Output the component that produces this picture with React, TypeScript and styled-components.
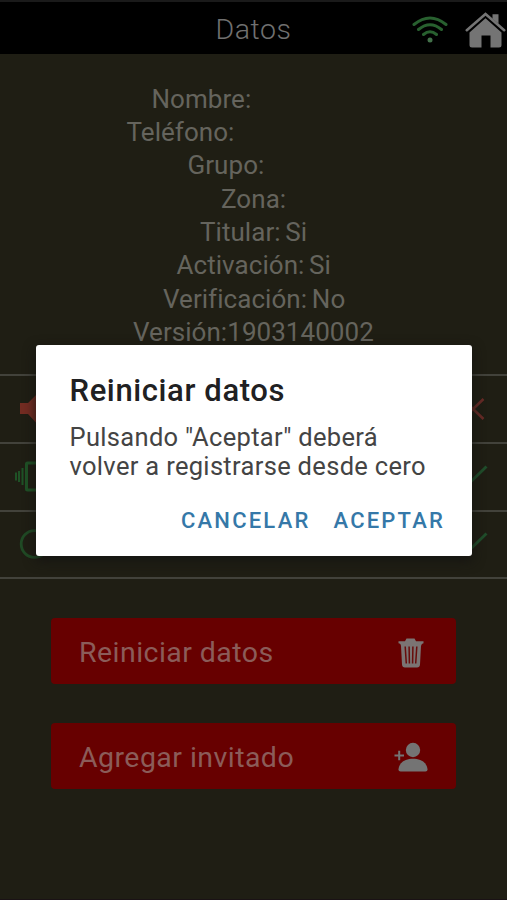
import React from "react";
import styled, { createGlobalStyle } from "styled-components";

const GlobalStyle = createGlobalStyle`
  *, *::before, *::after { box-sizing: border-box; }
  body {
    margin: 0;
    background: #1f1e14;
    font-family: Roboto, "Liberation Sans", sans-serif;
    overflow: hidden;
  }
  button { font: inherit; border: 0; cursor: pointer; }
`;

const Screen = styled.main`
  position: relative;
  width: 507px;
  height: 900px;
  display: flex;
  flex-direction: column;
  background: #1f1e14;
  border-top: 2px solid #1a1a1a;
  border-bottom: 1px solid #1a1215;
  overflow: hidden;
`;

const Header = styled.header`
  height: 52px;
  flex: none;
  display: grid;
  grid-template-columns: 1fr auto 1fr;
  align-items: center;
  background: #000;
`;

const HeaderTitle = styled.h1`
  grid-column: 2;
  margin: 4px 0 0;
  font-size: 28.5px;
  line-height: 32px;
  font-weight: 300;
  letter-spacing: 0.5px;
  color: #707070;
`;

const HeaderIcons = styled.div`
  display: flex;
  justify-content: flex-end;
  align-items: center;
  gap: 17px;
  padding: 3px 1px 0 0;
  svg { display: block; flex: none; }
`;

const Details = styled.section`
  height: 320px;
  flex: none;
  padding-top: 28.6px;
`;

const Detail = styled.p<{ $indent: number }>`
  margin: 0;
  padding-left: ${(p) => p.$indent}px;
  font-size: 26px;
  line-height: 33.35px;
  letter-spacing: 0.05px;
  word-spacing: -1.8px;
  color: #65645d;
  white-space: nowrap;
`;

const Options = styled.ul`
  margin: 0;
  padding: 0;
  list-style: none;
  flex: none;
  border-bottom: 2px solid #42423b;
`;

const Option = styled.li`
  height: 67.8px;
  display: flex;
  align-items: center;
  justify-content: space-between;
  padding: 0 16px 0 14px;
  border-top: 2px solid #42423b;
  svg { display: block; }
`;

const Actions = styled.div`
  display: flex;
  flex-direction: column;
  gap: 39px;
  padding: 39px 51px 0 51px;
`;

const ActionButton = styled.button`
  height: 66px;
  display: flex;
  align-items: center;
  justify-content: space-between;
  padding: 3px 25.5px 0 28px;
  border-radius: 4px;
  background: #670000;
  color: #8b5c59;
  line-height: 34px;
  text-align: left;
  svg { display: block; }
`;

const ActionLabel = styled.span`
  font-size: 28.5px;
  letter-spacing: 0.45px;
`;

const Overlay = styled.div`
  position: absolute;
  inset: -2px 0 0;
  padding: 345px 35px 0 36px;
`;

const Dialog = styled.section`
  height: 211px;
  display: flex;
  flex-direction: column;
  padding: 28px 25px 20px 33.5px;
  border-radius: 3px;
  background: #fff;
  box-shadow: 0 4px 12px 1px rgba(20, 19, 18, 0.8);
`;

const DialogTitle = styled.h2`
  margin: 0;
  font-size: 31px;
  line-height: 36px;
  font-weight: 500;
  letter-spacing: 0.62px;
  color: #202022;
`;

const DialogText = styled.p`
  margin: 14px 0 0;
  font-size: 25.5px;
  line-height: 28.5px;
  letter-spacing: 0.32px;
  color: #444;
  white-space: nowrap;
`;

const DialogActions = styled.div`
  display: flex;
  justify-content: flex-end;
  gap: 23px;
  margin-top: auto;
  padding-right: 2px;
`;

const TextButton = styled.button`
  padding: 0;
  background: none;
  color: #3578a8;
  && {
    font-size: 22px;
    font-weight: 500;
    line-height: 30px;
    letter-spacing: 2.2px;
  }
`;

const WifiIcon = () => (
  <svg width="36" height="28" viewBox="0 0 36 28" fill="none" stroke="#28602f" strokeWidth="3" strokeLinecap="round">
    <path d="M2 8.5Q18-4.5 34 8.5M6.5 13.5Q18 4 29.5 13.5M11.5 18.5Q18 13 24.5 18.5" />
    <circle cx="18" cy="24" r="2.5" fill="#43714a" stroke="none" />
  </svg>
);

const HomeIcon = () => (
  <svg width="41" height="36" viewBox="0 0 41 36" fill="#747474">
    <path d="M4.5 20.5 20.5 6.2 36.5 20.5V33a2.5 2.5 0 0 1-2.5 2.5h-8.5v-12h-9v12H7A2.5 2.5 0 0 1 4.5 33Z" />
    <path d="M1.8 18.2 20.5 2 39.2 18.2" fill="none" stroke="#747474" strokeWidth="2.6" strokeLinecap="round" />
    <path d="M27.5 2.2h6v9.5l-6-5Z" />
  </svg>
);

const SpeakerIcon = () => (
  <svg width="40" height="42" viewBox="0 0 40 42" fill="#732c22">
    <path d="M6 15h8l12-12v36L14 26H6Z" />
  </svg>
);

const VibrateIcon = () => (
  <svg width="42" height="38" viewBox="0 0 42 38" fill="none" stroke="#1f5226">
    <path d="M2 14.5v8M5 13v11M8.5 10v17" strokeWidth="2" />
    <rect x="12.5" y="5" width="18" height="27" rx="1" strokeWidth="3" />
  </svg>
);

const CircleIcon = () => (
  <svg width="42" height="42" viewBox="0 0 42 42" fill="none" stroke="#204a25" strokeWidth="2.8">
    <circle cx="20.5" cy="21" r="13.3" />
  </svg>
);

const CrossIcon = () => (
  <svg width="24" height="24" viewBox="0 0 24 24" fill="none" stroke="#662b26" strokeWidth="2.6">
    <path d="M16.5 2 6 12 16.5 22M-4 2 6 12-4 22" />
  </svg>
);

const CheckIcon = () => (
  <svg width="26" height="24" viewBox="0 0 26 24" fill="none" stroke="#204d2b" strokeWidth="2.9">
    <path d="M21.5 1.5 4.5 18-3 11" />
  </svg>
);

const TrashIcon = () => (
  <svg width="40" height="32" viewBox="0 0 40 32">
    <path d="M7.5 6.2V4.2H14L15.5 1.5h8L25 4.2h7.5v2Q30.5 6.2 30 9L29 27.5Q28.8 30.5 26 30.5H14Q11.2 30.5 11 27.5L10 9Q9.7 6.2 7.5 6.2Z" fill="#7b7473" />
    <path d="m14.2 9.5 1.1 17M18.1 9.5l.3 17M21.9 9.5l-.3 17M25.8 9.5l-1.1 17" fill="none" stroke="#680c0b" strokeWidth="1.5" />
  </svg>
);

const GuestIcon = () => (
  <svg width="40" height="34" viewBox="0 0 40 34" fill="#747474">
    <circle cx="22" cy="9" r="7.2" />
    <path d="M7.5 28C8.5 20.8 15 17.8 22 17.8S35.5 20.8 36.5 28Q36.8 30.5 34.5 30.5h-25Q7.2 30.5 7.5 28Z" />
    <path d="M3.5 14.5h9.5M8.2 9.7v9.6" stroke="#747474" strokeWidth="2" />
  </svg>
);

const details = [
  { text: "Nombre:", indent: 151.5 },
  { text: "Teléfono:", indent: 126.5 },
  { text: "Grupo:", indent: 187.5 },
  { text: "Zona:", indent: 221 },
  { text: "Titular: Si", indent: 200 },
  { text: "Activación: Si", indent: 176.5 },
  { text: "Verificación: No", indent: 163 },
  { text: "Versión:1903140002", indent: 133 },
];

export default function App() {
  return (
    <>
      <GlobalStyle />
      <Screen>
        <Header>
          <HeaderTitle>Datos</HeaderTitle>
          <HeaderIcons>
            <WifiIcon />
            <HomeIcon />
          </HeaderIcons>
        </Header>
        <Details>
          {details.map((d) => (
            <Detail key={d.text} $indent={d.indent}>{d.text}</Detail>
          ))}
        </Details>
        <Options>
          <Option><SpeakerIcon /><CrossIcon /></Option>
          <Option><VibrateIcon /><CheckIcon /></Option>
          <Option><CircleIcon /><CheckIcon /></Option>
        </Options>
        <Actions>
          <ActionButton>
            <ActionLabel>Reiniciar datos</ActionLabel>
            <TrashIcon />
          </ActionButton>
          <ActionButton>
            <ActionLabel>Agregar invitado</ActionLabel>
            <GuestIcon />
          </ActionButton>
        </Actions>
        <Overlay>
          <Dialog role="dialog" aria-modal="true" aria-labelledby="dialog-title">
            <DialogTitle id="dialog-title">Reiniciar datos</DialogTitle>
            <DialogText>
              Pulsando "Aceptar" deberá<br />volver a registrarse desde cero
            </DialogText>
            <DialogActions>
              <TextButton>CANCELAR</TextButton>
              <TextButton>ACEPTAR</TextButton>
            </DialogActions>
          </Dialog>
        </Overlay>
      </Screen>
    </>
  );
}
